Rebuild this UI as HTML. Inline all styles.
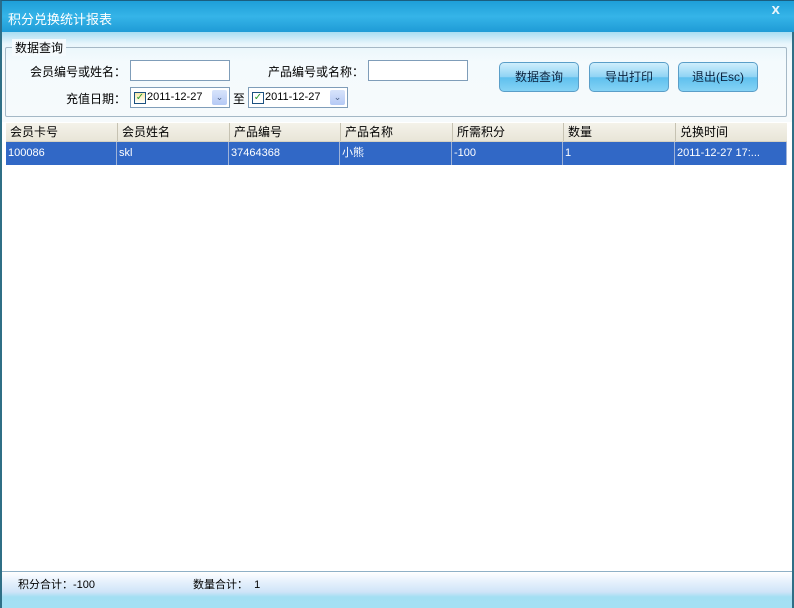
<!DOCTYPE html>
<html><head><meta charset="utf-8"><style>
*{margin:0;padding:0;box-sizing:border-box}
body{width:794px;height:608px;overflow:hidden;background:#fff;font-family:"Liberation Sans","Noto Sans CJK SC","WenQuanYi Zen Hei",sans-serif;font-size:12px;color:#000;position:relative}
.abs{position:absolute}
.title{left:0;top:0;width:794px;height:32px;background:linear-gradient(#1e9fd8,#35b4e8 50%,#1f9bd6);border-left:2px solid #2a6c8a;border-top:1px solid #1a5e80}
.title span{position:absolute;left:6px;top:8px;color:#fff;font-size:13px}
.close{right:14px;top:4px;color:#e8f4fb;font-weight:bold;font-size:11px;font-family:"DejaVu Sans",sans-serif}
.top{left:0;top:32px;width:794px;height:90px;background:linear-gradient(#a8ddf2,#e9f6fc 12px,#f4fafd 30px,#f6fafc)}
.grp{left:5px;top:47px;width:782px;height:70px;border:1px solid #a5b8c6;border-radius:2px}
.grpl{left:12px;top:39px;background:#f5fafd;padding:0 3px;font-size:12px}
.lbl{font-size:12px}
.inp{background:#fff;border:1px solid #7f9db9;height:21px}
.date{background:#fff;border:1px solid #7f9db9;height:21px;font-size:11px;font-family:"Liberation Sans",sans-serif}
.cb{display:inline-block;width:12px;height:12px;border:1px solid #1c5180;background:linear-gradient(#f7e9a8,#fff);margin:4px 1px 0 3px;vertical-align:top;color:#2a9a2a;font-size:10px;line-height:10px;text-align:center}
.dd{position:absolute;right:2px;top:2px;width:15px;height:15px;background:linear-gradient(#d8e4fb,#b5c9f5);border-radius:2px;color:#4d6185;font-size:9px;text-align:center;line-height:15px}
.btn{height:30px;width:80px;top:62px;border:1px solid #5a9ec8;border-radius:5px;background:linear-gradient(#cfeefc,#8fd3f4 50%,#5ec0ee 52%,#86d3f5);text-align:center;line-height:28px;font-size:12px;color:#0c2440}
.grid{left:6px;top:123px;width:781px;height:448px;background:#fff}
.hdr{left:6px;top:123px;width:781px;height:19px;background:linear-gradient(#f4f2ea,#e8e5d8);border-bottom:1px solid #d6d2c2}
.c{position:absolute;top:0;height:100%;padding-left:4px;line-height:18px;white-space:nowrap;overflow:hidden}
.hdr .c{border-left:1px solid #c6c2b2}
.row{left:6px;top:142px;width:781px;height:23px;background:#3168c6;color:#fff}
.row .c{border-right:1px solid #9fb3d8;line-height:23px;font-size:11px;padding-left:2px}
.bot{left:0;top:571px;width:794px;height:37px;background:linear-gradient(#fff,#eaf3fd 8px,#cfe4f8 20px,#a3dff3 25px,#a4e0f4);border-top:1px solid #8fb0c6}
.frameL{left:0;top:32px;width:2px;height:576px;background:#2f6f86}
.frameR{right:0;top:32px;width:2px;height:576px;background:#2f6f86}
</style></head><body>
<div class="abs title"><span>积分兑换统计报表</span></div>
<div class="abs close">X</div>
<div class="abs top"></div>
<div class="abs grp"></div>
<div class="abs grpl">数据查询</div>
<div class="abs lbl" style="left:30px;top:63px">会员编号或姓名：</div>
<div class="abs inp" style="left:130px;top:60px;width:100px"></div>
<div class="abs lbl" style="left:268px;top:63px">产品编号或名称：</div>
<div class="abs inp" style="left:368px;top:60px;width:100px"></div>
<div class="abs lbl" style="left:66px;top:90px">充值日期：</div>
<div class="abs date" style="left:130px;top:87px;width:100px"><span class="cb">✓</span><span style="line-height:19px">2011-12-27</span><div class="dd">⌄</div></div>
<div class="abs lbl" style="left:233px;top:90px">至</div>
<div class="abs date" style="left:248px;top:87px;width:100px"><span class="cb" style="background:#fff">✓</span><span style="line-height:19px">2011-12-27</span><div class="dd">⌄</div></div>
<div class="abs btn" style="left:499px">数据查询</div>
<div class="abs btn" style="left:589px">导出打印</div>
<div class="abs btn" style="left:678px">退出(Esc)</div>
<div class="abs grid"></div>
<div class="abs hdr">
<div class="c" style="left:0;width:111px;border-left:none">会员卡号</div>
<div class="c" style="left:111px;width:112px">会员姓名</div>
<div class="c" style="left:223px;width:111px">产品编号</div>
<div class="c" style="left:334px;width:112px">产品名称</div>
<div class="c" style="left:446px;width:111px">所需积分</div>
<div class="c" style="left:557px;width:112px">数量</div>
<div class="c" style="left:669px;width:112px">兑换时间</div>
</div>
<div class="abs row">
<div class="c" style="left:0;width:111px">100086</div>
<div class="c" style="left:111px;width:112px">skl</div>
<div class="c" style="left:223px;width:111px">37464368</div>
<div class="c" style="left:334px;width:112px">小熊</div>
<div class="c" style="left:446px;width:111px">-100</div>
<div class="c" style="left:557px;width:112px">1</div>
<div class="c" style="left:669px;width:112px">2011-12-27 17:...</div>
</div>
<div class="abs bot"></div>
<div class="abs" style="left:18px;top:576px;font-size:11px">积分合计：-100</div>
<div class="abs" style="left:193px;top:576px;font-size:11px">数量合计：&nbsp; 1</div>
<div class="abs frameL"></div><div class="abs frameR"></div>
</body></html>
